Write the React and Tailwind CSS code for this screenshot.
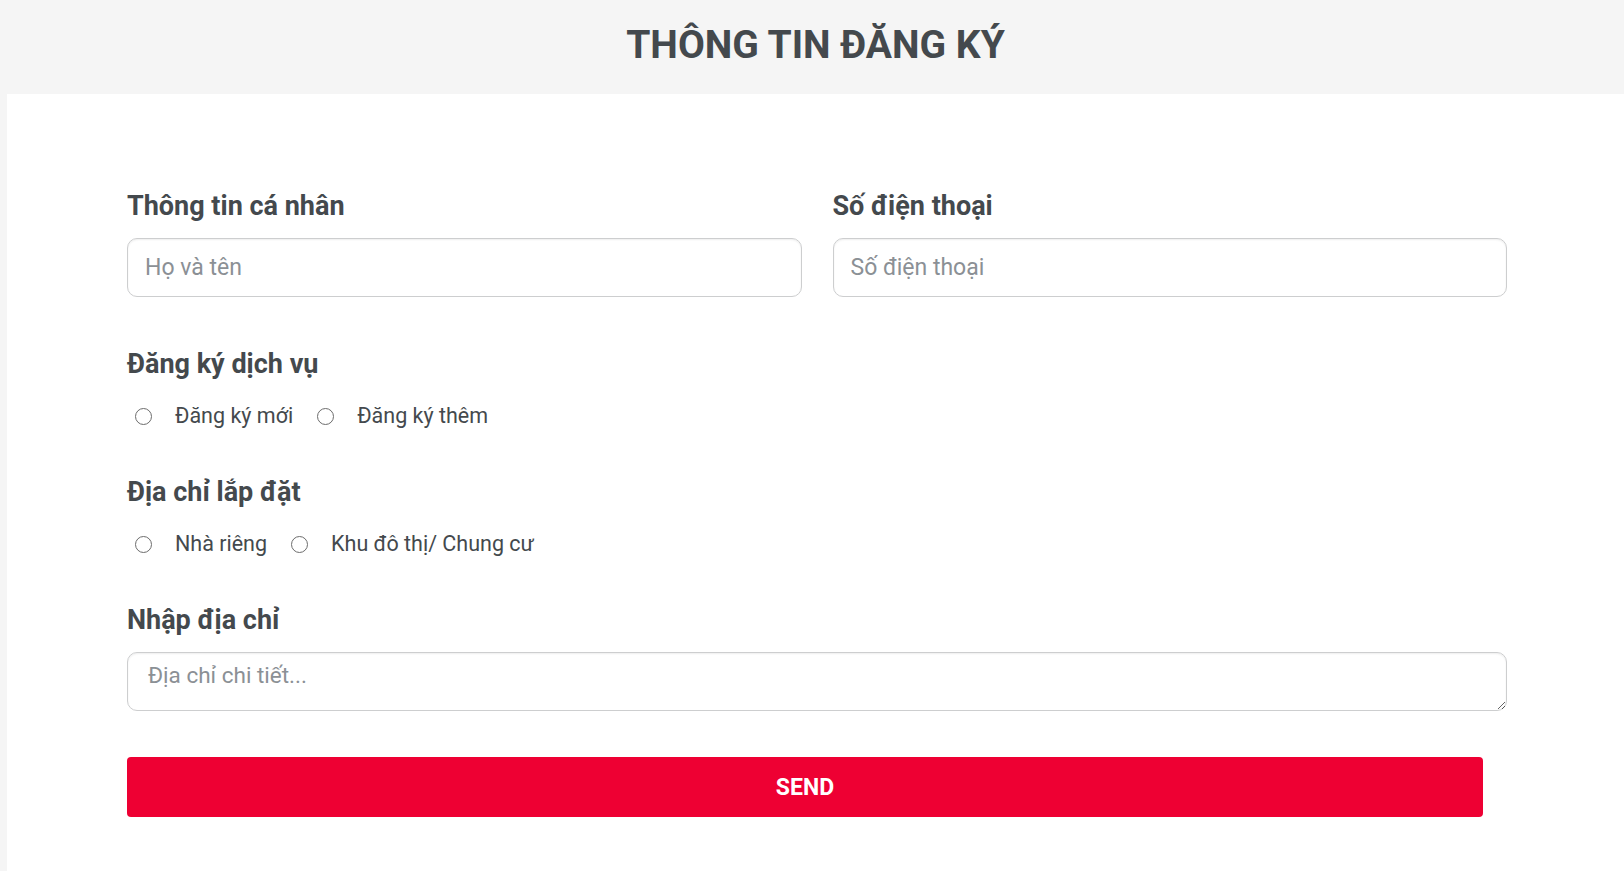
import { useState } from 'react';

const font = { fontFamily: 'Roboto, "Noto Sans", sans-serif' };

function Label({ children, className = '' }) {
  return (
    <h3 className={`text-[27px] font-bold leading-[30px] text-[#44494d] ${className}`}>{children}</h3>
  );
}

function RadioRow({ name, options, value, onChange, className = '' }) {
  return (
    <div className={`flex h-[30px] items-center gap-[24px] pl-[8px] ${className}`}>
      {options.map((opt) => (
        <label key={opt} className="flex cursor-pointer items-center">
          <input
            type="radio"
            name={name}
            checked={value === opt}
            onChange={() => onChange(opt)}
            className="h-[17px] w-[17px] appearance-none rounded-full border-[1.5px] border-[#6c6c6c] bg-white checked:border-[5px] checked:border-[#ee0033]"
          />
          <span className="ml-[23px] text-[21.5px] leading-[30px] text-[#44494d]">{opt}</span>
        </label>
      ))}
    </div>
  );
}

const inputCls =
  'h-[59px] w-full rounded-[10px] border border-[#cdcecf] bg-white px-[17px] text-[23px] text-[#44494d] shadow-[inset_0_1px_2px_rgba(0,0,0,0.07)] outline-none placeholder:text-[#8b9095]';

export default function App() {
  const [service, setService] = useState('');
  const [place, setPlace] = useState('');
  return (
    <div className="min-h-[871px] bg-[#f5f5f5]" style={font}>
      <header className="h-[94px] pl-[7px] pt-[20px] text-center">
        <h1 className="text-[39px] font-bold uppercase leading-[50px] text-[#44494d]">THÔNG TIN ĐĂNG KÝ</h1>
      </header>
      <form
        className="ml-[7px] min-h-[777px] bg-white pb-10 pl-[120px] pr-[117px] pt-[97px]"
        onSubmit={(e) => e.preventDefault()}
      >
        <div className="grid grid-cols-2 gap-x-[31px]">
          <div>
            <Label>Thông tin cá nhân</Label>
            <input className={`${inputCls} mt-[17px]`} placeholder="Họ và tên" />
          </div>
          <div>
            <Label>Số điện thoại</Label>
            <input className={`${inputCls} mt-[17px]`} placeholder="Số điện thoại" />
          </div>
        </div>

        <Label className="mt-[52px]">Đăng ký dịch vụ</Label>
        <RadioRow
          name="service"
          className="mt-[22px]"
          options={['Đăng ký mới', 'Đăng ký thêm']}
          value={service}
          onChange={setService}
        />

        <Label className="mt-[46px]">Địa chỉ lắp đặt</Label>
        <RadioRow
          name="place"
          className="mt-[22px]"
          options={['Nhà riêng', 'Khu đô thị/ Chung cư']}
          value={place}
          onChange={setPlace}
        />

        <Label className="mt-[46px]">Nhập địa chỉ</Label>
        <textarea
          className="mt-[17px] block h-[59px] w-full rounded-[10px] border border-[#cdcecf] bg-white px-5 pt-[6px] text-[22.5px] leading-[33px] text-[#44494d] shadow-[inset_0_1px_2px_rgba(0,0,0,0.07)] outline-none placeholder:text-[#8b9095]"
          placeholder="Địa chỉ chi tiết..."
        />

        <div className="mr-[24px] mt-[46px]">
          <button
            type="submit"
            className="h-[60px] w-full rounded-[4px] bg-[#ee0033] pt-[2px] text-[23px] font-bold uppercase text-white"
          >
            SEND
          </button>
        </div>
      </form>
    </div>
  );
}
